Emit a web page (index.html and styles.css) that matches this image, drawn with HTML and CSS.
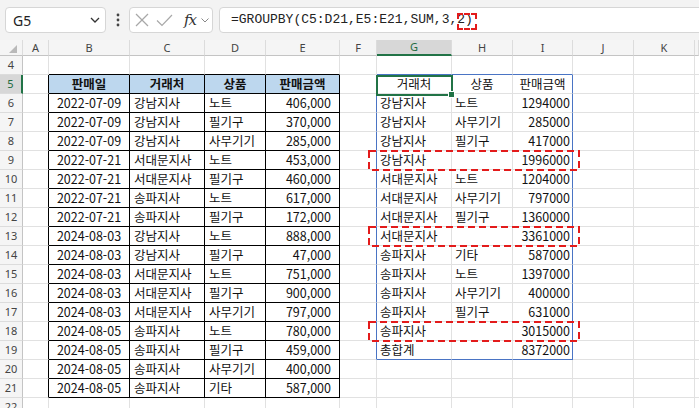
FILE: index.html
```html
<!DOCTYPE html>
<html lang="ko">
<head>
<meta charset="utf-8">
<title>GROUPBY</title>
<link rel="stylesheet" href="styles.css">
</head>
<body>
<div class="toolbar">
  <div class="namebox"><span>G5</span><svg class="chev" width="10" height="6" viewBox="0 0 10 6"><polyline points="1,1 5,5 9,1" fill="none" stroke="#333" stroke-width="1.3"/></svg></div>
  <div class="dots"><svg width="4" height="14" viewBox="0 0 4 14"><circle cx="2" cy="2" r="1.4" fill="#444"/><circle cx="2" cy="7" r="1.4" fill="#444"/><circle cx="2" cy="12" r="1.4" fill="#444"/></svg></div>
  <div class="fxbox">
    <svg class="ico-x" width="14" height="14" viewBox="0 0 14 14"><line x1="1" y1="1" x2="13" y2="13" stroke="#a8a8a8" stroke-width="1.2"/><line x1="13" y1="1" x2="1" y2="13" stroke="#a8a8a8" stroke-width="1.2"/></svg>
    <svg class="ico-ok" width="17" height="13" viewBox="0 0 17 13"><polyline points="1,6.5 6,11.5 16,1" fill="none" stroke="#a8a8a8" stroke-width="1.2"/></svg>
    <span class="fx">fx</span>
    <svg class="chev-s" width="8" height="5" viewBox="0 0 8 5"><polyline points="0.5,0.5 4,4 7.5,0.5" fill="none" stroke="#888" stroke-width="1"/></svg>
  </div>
  <div class="formula"><span>=GROUPBY(C5:D21,E5:E21,SUM,3,</span><span class="hl">2)</span></div>
</div>

<div class="sheet">
  <div class="row hdr">
    <div class="corner"><svg width="8" height="8" viewBox="0 0 8 8"><polygon points="8,0 8,8 0,8" fill="#b9b9b9"/></svg></div>
    <div class="ch">A</div><div class="ch">B</div><div class="ch">C</div><div class="ch">D</div><div class="ch">E</div><div class="ch">F</div><div class="ch sel-h">G</div><div class="ch">H</div><div class="ch">I</div><div class="ch">J</div><div class="ch">K</div><div class="ch"></div>
  </div>
  <div class="row"><div class="rh">4</div><div class="c"></div><div class="c ab"></div><div class="c ab"></div><div class="c ab"></div><div class="c ab"></div><div class="c"></div><div class="c gb"></div><div class="c gb"></div><div class="c gb"></div><div class="c"></div><div class="c"></div><div class="c"></div></div>
  <div class="row"><div class="rh sel-r">5</div><div class="c lb"></div><div class="c tb th">판매일</div><div class="c tb th">거래처</div><div class="c tb th">상품</div><div class="c tb th">판매금액</div><div class="c fb"></div><div class="c ctr">거래처</div><div class="c ctr">상품</div><div class="c ib ctr">판매금액</div><div class="c"></div><div class="c"></div><div class="c"></div></div>
  <div class="row"><div class="rh">6</div><div class="c lb"></div><div class="c tb ctr">2022-07-09</div><div class="c tb lt">강남지사</div><div class="c tb lt">노트</div><div class="c tb amt">406,000</div><div class="c fb"></div><div class="c">강남지사</div><div class="c">노트</div><div class="c ib num">1294000</div><div class="c"></div><div class="c"></div><div class="c"></div></div>
  <div class="row"><div class="rh">7</div><div class="c lb"></div><div class="c tb ctr">2022-07-09</div><div class="c tb lt">강남지사</div><div class="c tb lt">필기구</div><div class="c tb amt">370,000</div><div class="c fb"></div><div class="c">강남지사</div><div class="c">사무기기</div><div class="c ib num">285000</div><div class="c"></div><div class="c"></div><div class="c"></div></div>
  <div class="row"><div class="rh">8</div><div class="c lb"></div><div class="c tb ctr">2022-07-09</div><div class="c tb lt">강남지사</div><div class="c tb lt">사무기기</div><div class="c tb amt">285,000</div><div class="c fb"></div><div class="c">강남지사</div><div class="c">필기구</div><div class="c ib num">417000</div><div class="c"></div><div class="c"></div><div class="c"></div></div>
  <div class="row"><div class="rh">9</div><div class="c lb"></div><div class="c tb ctr">2022-07-21</div><div class="c tb lt">서대문지사</div><div class="c tb lt">노트</div><div class="c tb amt">453,000</div><div class="c fb"></div><div class="c">강남지사</div><div class="c"></div><div class="c ib num">1996000</div><div class="c"></div><div class="c"></div><div class="c"></div></div>
  <div class="row"><div class="rh">10</div><div class="c lb"></div><div class="c tb ctr">2022-07-21</div><div class="c tb lt">서대문지사</div><div class="c tb lt">필기구</div><div class="c tb amt">460,000</div><div class="c fb"></div><div class="c">서대문지사</div><div class="c">노트</div><div class="c ib num">1204000</div><div class="c"></div><div class="c"></div><div class="c"></div></div>
  <div class="row"><div class="rh">11</div><div class="c lb"></div><div class="c tb ctr">2022-07-21</div><div class="c tb lt">송파지사</div><div class="c tb lt">노트</div><div class="c tb amt">617,000</div><div class="c fb"></div><div class="c">서대문지사</div><div class="c">사무기기</div><div class="c ib num">797000</div><div class="c"></div><div class="c"></div><div class="c"></div></div>
  <div class="row"><div class="rh">12</div><div class="c lb"></div><div class="c tb ctr">2022-07-21</div><div class="c tb lt">송파지사</div><div class="c tb lt">필기구</div><div class="c tb amt">172,000</div><div class="c fb"></div><div class="c">서대문지사</div><div class="c">필기구</div><div class="c ib num">1360000</div><div class="c"></div><div class="c"></div><div class="c"></div></div>
  <div class="row"><div class="rh">13</div><div class="c lb"></div><div class="c tb ctr">2024-08-03</div><div class="c tb lt">강남지사</div><div class="c tb lt">노트</div><div class="c tb amt">888,000</div><div class="c fb"></div><div class="c">서대문지사</div><div class="c"></div><div class="c ib num">3361000</div><div class="c"></div><div class="c"></div><div class="c"></div></div>
  <div class="row"><div class="rh">14</div><div class="c lb"></div><div class="c tb ctr">2024-08-03</div><div class="c tb lt">강남지사</div><div class="c tb lt">필기구</div><div class="c tb amt">47,000</div><div class="c fb"></div><div class="c">송파지사</div><div class="c">기타</div><div class="c ib num">587000</div><div class="c"></div><div class="c"></div><div class="c"></div></div>
  <div class="row"><div class="rh">15</div><div class="c lb"></div><div class="c tb ctr">2024-08-03</div><div class="c tb lt">서대문지사</div><div class="c tb lt">노트</div><div class="c tb amt">751,000</div><div class="c fb"></div><div class="c">송파지사</div><div class="c">노트</div><div class="c ib num">1397000</div><div class="c"></div><div class="c"></div><div class="c"></div></div>
  <div class="row"><div class="rh">16</div><div class="c lb"></div><div class="c tb ctr">2024-08-03</div><div class="c tb lt">서대문지사</div><div class="c tb lt">필기구</div><div class="c tb amt">900,000</div><div class="c fb"></div><div class="c">송파지사</div><div class="c">사무기기</div><div class="c ib num">400000</div><div class="c"></div><div class="c"></div><div class="c"></div></div>
  <div class="row"><div class="rh">17</div><div class="c lb"></div><div class="c tb ctr">2024-08-03</div><div class="c tb lt">서대문지사</div><div class="c tb lt">사무기기</div><div class="c tb amt">797,000</div><div class="c fb"></div><div class="c">송파지사</div><div class="c">필기구</div><div class="c ib num">631000</div><div class="c"></div><div class="c"></div><div class="c"></div></div>
  <div class="row"><div class="rh">18</div><div class="c lb"></div><div class="c tb ctr">2024-08-05</div><div class="c tb lt">송파지사</div><div class="c tb lt">노트</div><div class="c tb amt">780,000</div><div class="c fb"></div><div class="c">송파지사</div><div class="c"></div><div class="c ib num">3015000</div><div class="c"></div><div class="c"></div><div class="c"></div></div>
  <div class="row"><div class="rh">19</div><div class="c lb"></div><div class="c tb ctr">2024-08-05</div><div class="c tb lt">송파지사</div><div class="c tb lt">필기구</div><div class="c tb amt">459,000</div><div class="c fb"></div><div class="c bb">총합계</div><div class="c bb"></div><div class="c ib bb num">8372000</div><div class="c"></div><div class="c"></div><div class="c"></div></div>
  <div class="row"><div class="rh">20</div><div class="c lb"></div><div class="c tb ctr">2024-08-05</div><div class="c tb lt">송파지사</div><div class="c tb lt">사무기기</div><div class="c tb amt">400,000</div><div class="c"></div><div class="c"></div><div class="c"></div><div class="c"></div><div class="c"></div><div class="c"></div><div class="c"></div></div>
  <div class="row"><div class="rh">21</div><div class="c lb"></div><div class="c tb ctr">2024-08-05</div><div class="c tb lt">송파지사</div><div class="c tb lt">기타</div><div class="c tb amt">587,000</div><div class="c"></div><div class="c"></div><div class="c"></div><div class="c"></div><div class="c"></div><div class="c"></div><div class="c"></div></div>
  <div class="row"><div class="rh">22</div><div class="c"></div><div class="c"></div><div class="c"></div><div class="c"></div><div class="c"></div><div class="c"></div><div class="c"></div><div class="c"></div><div class="c"></div><div class="c"></div><div class="c"></div><div class="c"></div></div>

  <div class="selbox"></div>
  <svg class="mark m9" width="212" height="21" viewBox="0 0 212 21"><rect x="1" y="1" width="210" height="19" fill="none" stroke="#e31b1b" stroke-width="2" stroke-dasharray="7 4"/></svg>
  <svg class="mark m13" width="212" height="21" viewBox="0 0 212 21"><rect x="1" y="1" width="210" height="19" fill="none" stroke="#e31b1b" stroke-width="2" stroke-dasharray="7 4"/></svg>
  <svg class="mark m18" width="212" height="21" viewBox="0 0 212 21"><rect x="1" y="1" width="210" height="19" fill="none" stroke="#e31b1b" stroke-width="2" stroke-dasharray="7 4"/></svg>
</div>
</body>
</html>
```

FILE: styles.css
```css
html, body {
  margin: 0;
  padding: 0;
}
body {
  width: 699px;
  height: 408px;
  overflow: hidden;
  background: #fff;
  font-family: "Noto Sans CJK KR", "Liberation Sans", sans-serif;
  color: #000;
}

/* ---------- formula bar ---------- */
.toolbar {
  height: 40px;
  box-sizing: border-box;
  background: #f3f3f3;
  display: flex;
  align-items: flex-start;
  padding: 7px 0 0 5px;
}
.namebox {
  width: 101px;
  height: 26px;
  box-sizing: border-box;
  background: #fff;
  border: 1px solid #d6d6d6;
  border-radius: 4px;
  display: flex;
  align-items: center;
  justify-content: space-between;
  padding: 0 5px 0 7px;
  font-family: "Noto Sans", "Liberation Sans", sans-serif;
  font-size: 14px;
  color: #222;
}
.dots {
  width: 23px;
  height: 26px;
  display: flex;
  align-items: center;
  justify-content: center;
}
.fxbox {
  width: 84px;
  height: 26px;
  box-sizing: border-box;
  background: #fff;
  border: 1px solid #d6d6d6;
  border-radius: 4px;
  display: flex;
  align-items: center;
  padding-left: 5px;
}
.ico-ok {
  margin-left: 7px;
}
.fx {
  margin-left: 11px;
  font-family: "DejaVu Serif", "Liberation Serif", serif;
  font-style: italic;
  font-size: 15px;
  color: #333;
  letter-spacing: -1px;
}
.chev-s {
  margin-left: 5px;
}
.formula {
  flex: 1;
  margin: 0 -10px 0 6px;
  height: 26px;
  box-sizing: border-box;
  background: #fff;
  border: 1px solid #d6d6d6;
  border-radius: 4px;
  padding-left: 11px;
  font-family: "Liberation Mono", monospace;
  font-size: 13px;
  line-height: 24px;
  color: #222;
  white-space: nowrap;
}
.hl {
  position: relative;
}
.hl::after {
  content: "";
  position: absolute;
  left: 0;
  right: -4px;
  top: 1px;
  bottom: -3px;
  border: 2px dashed #e31b1b;
}

/* ---------- sheet ---------- */
.sheet {
  position: relative;
}
.row {
  display: grid;
  grid-template-columns: 23px 26px 81px 75px 61px 74px 37px 75px 61px 60px 61px 61px 1fr;
  height: 19px;
}
.row.hdr {
  height: 16px;
}
.corner, .ch {
  background: #f5f5f5;
  border-right: 1px solid #dcdcdc;
  border-bottom: 1px solid #c4c4c4;
  box-sizing: border-box;
}
.corner {
  display: flex;
  justify-content: flex-end;
  align-items: flex-end;
  padding: 0 5px 2px 0;
}
.corner svg { display: block; }
.ch {
  font-family: "Noto Sans", "Liberation Sans", sans-serif;
  font-size: 11px;
  line-height: 15px;
  text-align: center;
  color: #444;
}
.ch.sel-h {
  background: #d7d7d7;
  border-bottom: 2px solid #217346;
  color: #1e6b40;
  line-height: 14px;
}
.rh {
  background: #f5f5f5;
  border-right: 1px solid #c4c4c4;
  border-bottom: 1px solid #dcdcdc;
  box-sizing: border-box;
  font-family: "Noto Sans", "Liberation Sans", sans-serif;
  font-size: 11px;
  line-height: 18px;
  text-align: center;
  color: #444;
}
.rh.sel-r {
  background: #d7d7d7;
  border-right: 2px solid #217346;
  color: #1e6b40;
}
.c {
  box-sizing: border-box;
  border-right: 1px solid #e1e1e1;
  border-bottom: 1px solid #e1e1e1;
  padding: 0 3px;
  font-size: 12.5px;
  line-height: 18px;
  white-space: nowrap;
  overflow: hidden;
  color: #111;
}
.lt { padding-left: 4px; }
.ctr { text-align: center; }
.num { text-align: right; padding-right: 2px; }
.amt { text-align: right; padding-right: 8px; }
.th {
  background: #bdd7ee;
  font-weight: bold;
  text-align: center;
}
/* black table borders */
.tb { border-right-color: #000; border-bottom-color: #000; }
.lb { border-right-color: #000; }
.ab { border-bottom-color: #000; }
/* blue spill range borders */
.fb { border-right-color: #4a74c4; }
.gb { border-bottom-color: #4a74c4; }
.ib { border-right-color: #4a74c4; }
.bb { border-bottom-color: #4a74c4; }

/* overlays */
.selbox {
  position: absolute;
  left: 376px;
  top: 35px;
  width: 77px;
  height: 21px;
  box-sizing: border-box;
  border: 2px solid #217346;
}
.selbox::after {
  content: "";
  position: absolute;
  right: -4px;
  bottom: -4px;
  width: 5px;
  height: 5px;
  background: #217346;
  border: 1px solid #fff;
}
.mark {
  position: absolute;
  left: 368px;
  display: block;
}
.m9 { top: 110px; }
.m13 { top: 186px; }
.m18 { top: 281px; }
```
